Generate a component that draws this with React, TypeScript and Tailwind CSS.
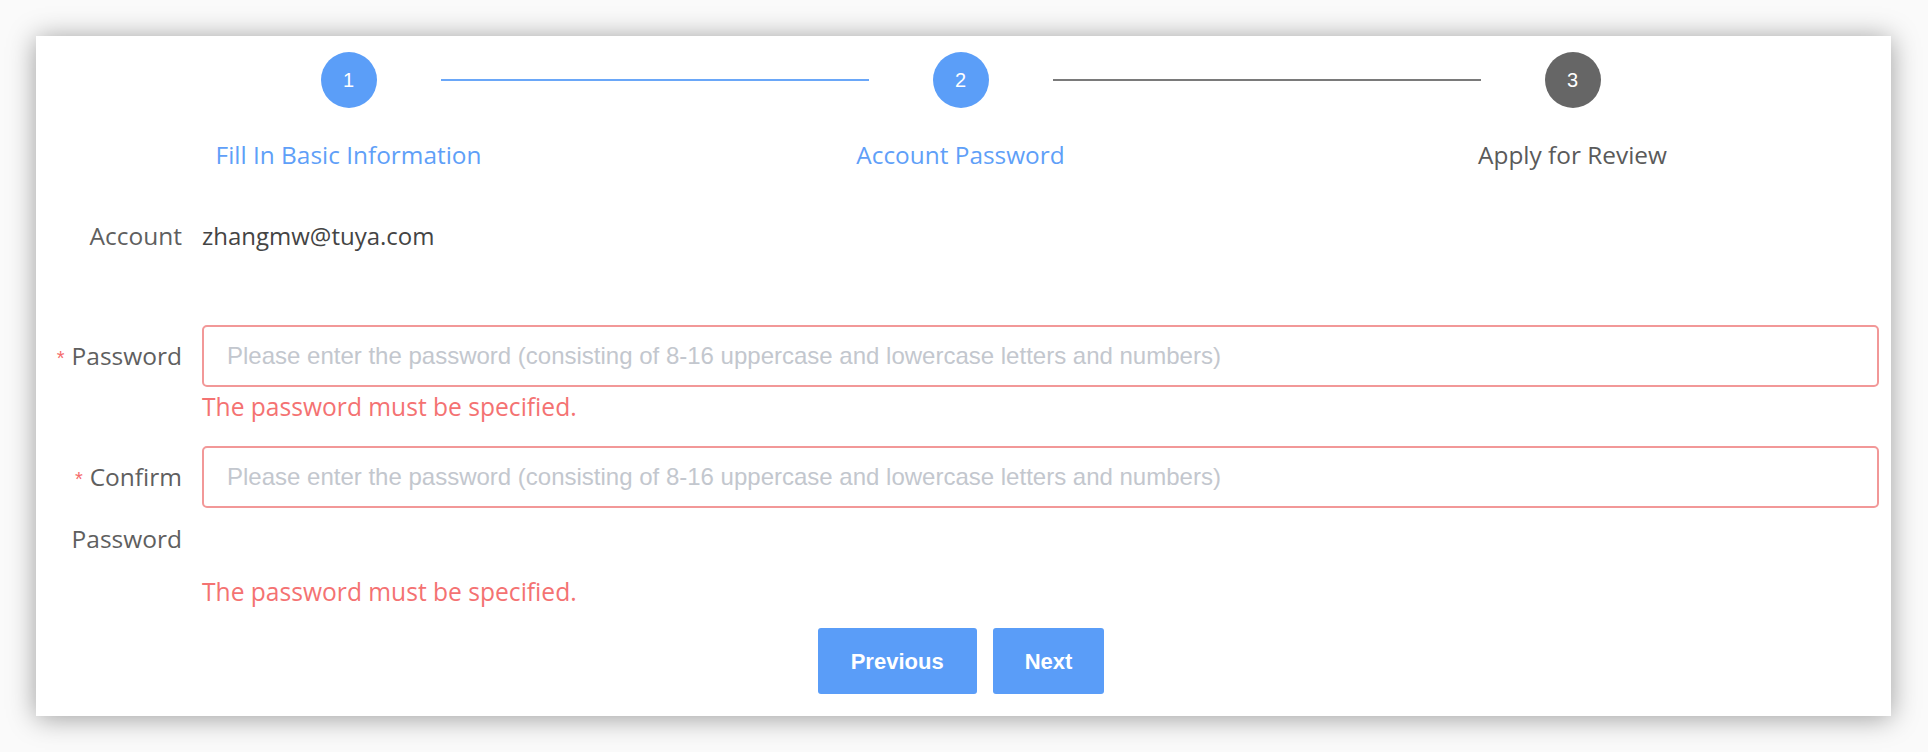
import React from "react";

const sans = { fontFamily: '"Open Sans", "Noto Sans", sans-serif' };

function Step({ n, active, label }: { n: number; active: boolean; label: string }) {
  return (
    <div className="flex w-[56px] shrink-0 flex-col items-center">
      <div
        className={`flex h-[56px] w-[56px] items-center justify-center rounded-full font-['Liberation_Sans',Arial,sans-serif] text-[20px] text-white ${
          active ? "bg-[#5b9ef8]" : "bg-[#666666]"
        }`}
      >
        {n}
      </div>
      <div
        className={`mt-[30px] whitespace-nowrap text-[24.4px] leading-[34px] ${
          active ? "text-[#5f9ff8]" : "text-[#5a5a5a]"
        }`}
      >
        {label}
      </div>
    </div>
  );
}

function Star() {
  return (
    <span className="mr-[7px] font-['Liberation_Sans',Arial,sans-serif] text-[20px] leading-none text-[#f56c6c]">*</span>
  );
}

function Label({ children, required }: { children: React.ReactNode; required?: boolean }) {
  return (
    <div className="w-[166px] shrink-0 pr-[20px] text-right text-[24.5px] leading-[62px] text-[#5f5f5f]">
      {required && <Star />}
      {children}
    </div>
  );
}

function PwInput() {
  return (
    <input
      type="password"
      placeholder="Please enter the password (consisting of 8-16 uppercase and lowercase letters and numbers)"
      className="h-[62px] flex-1 rounded-[5px] border-2 border-[#f29898] bg-white px-[23px] font-['Liberation_Sans',Arial,sans-serif] text-[24px] text-[#333] outline-none placeholder:text-[#c3c7ce]"
    />
  );
}

export default function App() {
  return (
    <div className="h-[752px] w-[1928px] overflow-hidden bg-[#fafafa] pl-[36px] pt-[36px]" style={sans}>
      <div className="h-[680px] w-[1855px] bg-white pt-[16px] shadow-[0_2px_26px_rgba(0,0,0,0.38)]">
        {/* Steps */}
        <div className="flex items-start justify-center gap-[64px] pr-[6px]">
          <Step n={1} active label="Fill In Basic Information" />
          <div className="mt-[27px] h-[2px] w-[428px] bg-[#6aa7f8]" />
          <Step n={2} active label="Account Password" />
          <div className="mt-[27px] h-[2px] w-[428px] bg-[#7a7a7a]" />
          <Step n={3} active={false} label="Apply for Review" />
        </div>

        {/* Form */}
        <div className="pr-[12px]">
          <div className="mt-[33px] flex">
            <Label>Account</Label>
            <div className="text-[24px] leading-[62px] text-[#444]">zhangmw@tuya.com</div>
          </div>

          <div className="mt-[58px] flex">
            <Label required>Password</Label>
            <PwInput />
          </div>
          <div className="ml-[166px] mt-[3px] text-[24.6px] leading-[34px] text-[#f47272]">
            The password must be specified.
          </div>

          <div className="mt-[22px] flex items-start">
            <div className="w-[166px] shrink-0 pr-[20px] text-right text-[24.5px] leading-[62px] text-[#5f5f5f]">
              <div>
                <Star />
                Confirm
              </div>
              <div>Password</div>
            </div>
            <PwInput />
          </div>
          <div className="ml-[166px] mt-[5px] text-[24.6px] leading-[34px] text-[#f47272]">
            The password must be specified.
          </div>
        </div>

        <div className="mt-[19px] flex justify-center gap-[16px] pr-[5px] font-['Liberation_Sans',Arial,sans-serif]">
          <button className="h-[66px] rounded-[3px] bg-[#5a9df8] px-[33px] text-[22px] font-bold text-white">
            Previous
          </button>
          <button className="h-[66px] rounded-[3px] bg-[#5a9df8] px-[32px] text-[22px] font-bold text-white">
            Next
          </button>
        </div>
      </div>
    </div>
  );
}
